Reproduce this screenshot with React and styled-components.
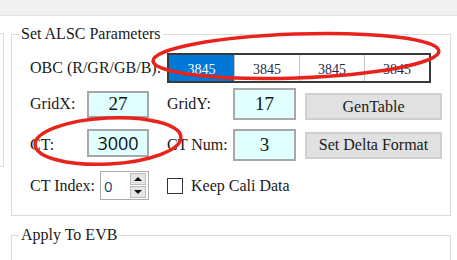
import React from 'react';
import styled, { createGlobalStyle } from 'styled-components';

const GlobalStyle = createGlobalStyle`
  html, body {
    margin: 0;
    padding: 0;
    background: #ffffff;
    overflow: hidden;
  }
  body {
    font-family: "Liberation Serif", "Times New Roman", serif;
    color: #1a1a1a;
  }
`;

const Page = styled.div`
  position: relative;
  width: 457px;
  height: 260px;
  overflow: hidden;
  background: #ffffff;
`;

const TopBar = styled.div`
  height: 15px;
  background: #f0f0f0;
  border-bottom: 1px solid #e3e3e3;
`;

const Main = styled.div`
  display: flex;
  align-items: flex-start;
`;

const SidePanel = styled.div`
  width: 3px;
  height: 132px;
  margin-top: 17px;
  border: 1px solid #dcdcdc;
  border-left: none;
`;

const Column = styled.div`
  display: flex;
  flex-direction: column;
  gap: 10px;
  margin-left: 7px;
  margin-top: 9px;
`;

const GroupBox = styled.fieldset`
  box-sizing: border-box;
  width: 440px;
  min-width: 0;
  margin: 0;
  padding: 10px 0 15px 18px;
  border: 1px solid #dcdcdc;
  min-height: ${(p) => p.$minHeight || 0}px;
`;

// legend sits at the fieldset's padding edge, pull it back to the title spot
const Legend = styled.legend`
  margin-left: -11px;
  padding: 0 2px;
  font-size: 16px;
  line-height: 18px;
  color: #1a1a1a;
`;

const Row = styled.div`
  display: grid;
  grid-template-columns: 57px 80px 66px 72px 137px;
  align-items: center;
  height: ${(p) => p.$h}px;
  margin-top: ${(p) => p.$mt || 0}px;
`;

const Label = styled.span`
  font-size: 16px;
  white-space: nowrap;
  grid-column: ${(p) => p.$span || 'auto'};
`;

const ValueBox = styled.div`
  box-sizing: border-box;
  width: ${(p) => p.$w}px;
  height: ${(p) => p.$h}px;
  align-self: ${(p) => p.$align || 'center'};
  display: flex;
  align-items: center;
  justify-content: center;
  background: #e0ffff;
  border: 2px solid #a8a8a8;
  font-family: ${(p) => (p.$sans ? '"Open Sans", "Liberation Sans", sans-serif' : '"Liberation Serif", serif')};
  font-size: ${(p) => (p.$sans ? 18 : 19)}px;
  color: #111111;
`;

const Button = styled.button`
  box-sizing: border-box;
  width: 137px;
  height: 27px;
  align-self: ${(p) => p.$align || 'center'};
  margin: 0;
  padding: 0;
  background: #e1e1e1;
  border: 2px solid #cfcfcf;
  font-family: "Liberation Serif", serif;
  font-size: 16px;
  color: #1a1a1a;
`;

const ObcTable = styled.div`
  grid-column: 3 / 6;
  box-sizing: border-box;
  width: 264px;
  height: 30px;
  display: grid;
  grid-template-columns: repeat(4, 1fr);
  border: 2px solid #3a3a3a;
  background: #ffffff;
`;

const ObcCell = styled.div`
  display: flex;
  align-items: center;
  justify-content: center;
  padding-top: 3px;
  font-size: 14px;
  color: ${(p) => (p.$active ? '#ffffff' : '#1f2a44')};
  background: ${(p) => (p.$active ? '#0078d7' : '#ffffff')};
  border-left: ${(p) => (p.$first ? 'none' : '1px solid #c4c4c4')};
`;

const IndexField = styled.div`
  grid-column: 1 / 3;
  width: 119px;
  display: flex;
  align-items: center;
  justify-content: space-between;
`;

const Spinner = styled.div`
  box-sizing: border-box;
  width: 49px;
  height: 29px;
  display: flex;
  align-items: center;
  justify-content: space-between;
  padding: 1px 2px 1px 3px;
  border: 1px solid #acacac;
  background: #ffffff;
`;

const SpinValue = styled.span`
  font-family: "Open Sans", "Liberation Sans", sans-serif;
  font-size: 15px;
  color: #1d3f7a;
`;

const SpinButtons = styled.div`
  display: flex;
  flex-direction: column;
  gap: 1px;
`;

const SpinButton = styled.div`
  box-sizing: border-box;
  width: 16px;
  height: 12px;
  display: flex;
  align-items: center;
  justify-content: center;
  background: #e5e5e5;
  border: 1px solid #bdbdbd;
`;

const Arrow = styled.span`
  width: 0;
  height: 0;
  border-left: 4px solid transparent;
  border-right: 4px solid transparent;
  ${(p) => (p.$up ? 'border-bottom: 4px solid #111;' : 'border-top: 4px solid #111;')}
`;

const CheckField = styled.label`
  grid-column: 3 / 6;
  display: flex;
  align-items: center;
  gap: 8px;
  font-size: 16px;
`;

const CheckBox = styled.span`
  box-sizing: border-box;
  width: 16px;
  height: 16px;
  border: 1px solid #333333;
  background: #ffffff;
`;

const Annotations = styled.svg`
  position: absolute;
  left: 0;
  top: 0;
  pointer-events: none;
`;

const obcValues = ['3845', '3845', '3845', '3845'];

export default function App() {
  return (
    <Page>
      <GlobalStyle />
      <TopBar />
      <Main>
        <SidePanel />
        <Column>
          <GroupBox>
            <Legend>Set ALSC Parameters</Legend>

            <Row $h={30}>
              <Label $span="1 / 3">OBC (R/GR/GB/B):</Label>
              <ObcTable>
                {obcValues.map((v, i) => (
                  <ObcCell key={i} $active={i === 0} $first={i === 0}>
                    {v}
                  </ObcCell>
                ))}
              </ObcTable>
            </Row>

            <Row $h={32} $mt={5}>
              <Label>GridX:</Label>
              <ValueBox $w={62} $h={27}>27</ValueBox>
              <Label>GridY:</Label>
              <ValueBox $w={63} $h={32}>17</ValueBox>
              <Button $align="end">GenTable</Button>
            </Row>

            <Row $h={32} $mt={9}>
              <Label>CT:</Label>
              <ValueBox $w={62} $h={28} $align="start" $sans>3000</ValueBox>
              <Label>CT Num:</Label>
              <ValueBox $w={63} $h={32}>3</ValueBox>
              <Button>Set Delta Format</Button>
            </Row>

            <Row $h={29} $mt={10}>
              <IndexField>
                <Label>CT Index:</Label>
                <Spinner>
                  <SpinValue>0</SpinValue>
                  <SpinButtons>
                    <SpinButton><Arrow $up /></SpinButton>
                    <SpinButton><Arrow /></SpinButton>
                  </SpinButtons>
                </Spinner>
              </IndexField>
              <CheckField>
                <CheckBox />
                Keep Cali Data
              </CheckField>
            </Row>
          </GroupBox>

          <GroupBox $minHeight={60}>
            <Legend>Apply To EVB</Legend>
          </GroupBox>
        </Column>
      </Main>

      <Annotations width="457" height="260" viewBox="0 0 457 260">
        <ellipse cx="296" cy="56" rx="143" ry="22" transform="rotate(-2 296 56)" fill="none" stroke="#e8231c" strokeWidth="3.5" />
        <ellipse cx="108" cy="141" rx="73" ry="23" transform="rotate(-3 108 141)" fill="none" stroke="#e8231c" strokeWidth="3.5" />
      </Annotations>
    </Page>
  );
}
